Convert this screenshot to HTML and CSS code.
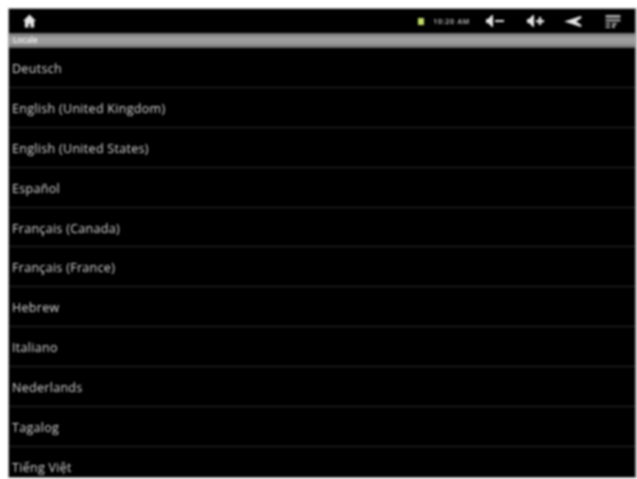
FILE: index.html
```html
<!DOCTYPE html>
<html lang="en">
<head>
    <meta charset="UTF-8">
    <title>Locale</title>
    <link rel="stylesheet" href="styles.css">
</head>
<body>
    <div class="screen">
        <div class="status-bar">
            <svg class="icon home" viewBox="0 0 14 14"><path d="M7 0 L14 7 H12 V14 H8 V10 H6 V14 H2 V7 H0 Z"/></svg>
            <div class="spacer"></div>
            <div class="battery"></div>
            <span class="clock">10:20 AM</span>
            <svg class="icon vol" viewBox="0 0 18 12"><path d="M0 4 H2 L6 0 H7 V12 H6 L2 8 H0 Z"/><rect x="9" y="5" width="9" height="2"/></svg>
            <svg class="icon vol" viewBox="0 0 18 12"><path d="M0 4 H2 L6 0 H7 V12 H6 L2 8 H0 Z"/><rect x="9" y="5" width="8" height="2.4"/><rect x="11.8" y="2" width="2.4" height="8"/></svg>
            <svg class="icon back" viewBox="0 0 19 12"><path d="M0 6 L18 0 L19 2 L13 6 L19 10 L18 12 Z"/></svg>
            <svg class="icon menu" viewBox="0 0 16 14"><path d="M0 0 H16 V3 H0 Z M0 4.5 H16 V7 H0 Z M0 8.5 H5 V10.5 H0 Z M7 8.5 H12 V10.5 H7 Z M0 12 H5 V14 H0 Z M7 11 H10 V14 H7 Z"/></svg>
        </div>
        <div class="list-header">Locale</div>
        <ul class="locale-list">
            <li>Deutsch</li>
            <li>English (United Kingdom)</li>
            <li>English (United States)</li>
            <li>Español</li>
            <li>Français (Canada)</li>
            <li>Français (France)</li>
            <li>Hebrew</li>
            <li>Italiano</li>
            <li>Nederlands</li>
            <li>Tagalog</li>
            <li>Tiếng Việt</li>
        </ul>
    </div>
</body>
</html>
```

FILE: styles.css
```css
html, body {
    height: 100%;
}

body {
    margin: 0;
    padding: 8px 0 1px 8px;
    box-sizing: border-box;
    background-color: #fff;
    overflow: hidden;
    font-family: "Open Sans", sans-serif;
}

.screen {
    height: 100%;
    background-color: #000;
    display: flex;
    flex-direction: column;
    overflow: hidden;
    border: 1px solid #a8a8a8;
    border-right-width: 2px;
    box-sizing: border-box;
    filter: blur(0.8px);
}

.status-bar {
    height: 24px;
    flex: none;
    display: flex;
    align-items: center;
    padding: 0 14px 0 14px;
}

.spacer {
    flex: 1;
}

.icon {
    fill: #e6e6e6;
    display: block;
}

.home {
    width: 13px;
    height: 14px;
}

.battery {
    width: 6px;
    height: 7px;
    background-color: #c0dd66;
    margin-right: 9px;
}

.clock {
    font-size: 7px;
    font-weight: 600;
    letter-spacing: 0.75px;
    color: #d0d0d0;
    margin-right: 16px;
}

.vol {
    width: 18px;
    height: 12px;
    margin-right: 23px;
}

.vol + .vol {
    margin-right: 18px;
}

.back {
    width: 20px;
    height: 11px;
    margin-right: 22px;
}

.menu {
    width: 16px;
    height: 13px;
    fill: #aaa;
}

.list-header {
    height: 15px;
    flex: none;
    background: linear-gradient(#707070, #a0a0a0 35%, #9a9a9a 70%, #666);
    color: #eee;
    font-size: 8px;
    font-weight: 600;
    line-height: 13px;
    padding-left: 4px;
    box-sizing: border-box;
}

.locale-list {
    list-style: none;
    margin: 0;
    padding: 0;
}

.locale-list li {
    height: 39.9px;
    box-sizing: border-box;
    border-bottom: 1px solid #2c2c2c;
    padding: 2px 0 0 3px;
    display: flex;
    align-items: center;
    color: #d8d8d8;
    font-size: 12.5px;
    font-weight: 500;
    letter-spacing: 0.3px;
}
```
